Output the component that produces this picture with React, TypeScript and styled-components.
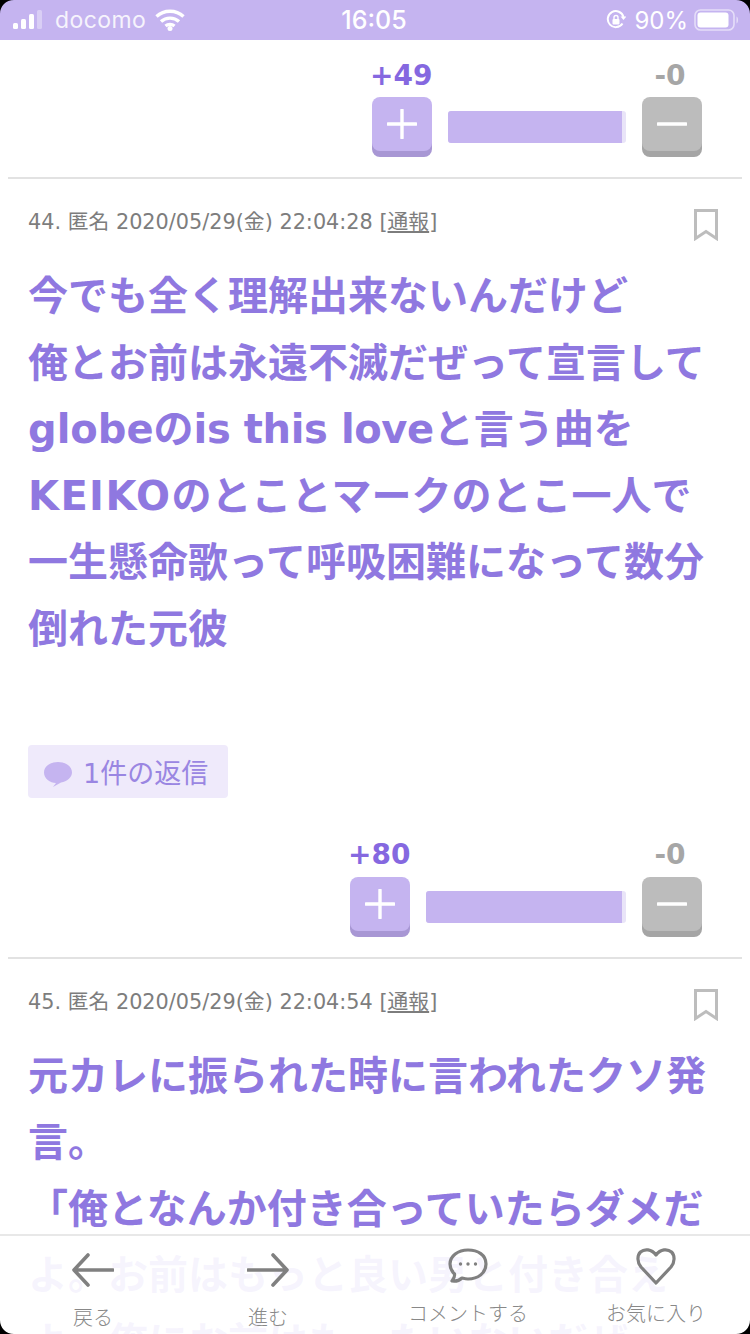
import React from "react";
import styled, { createGlobalStyle } from "styled-components";

const Global = createGlobalStyle`
  html, body { margin: 0; padding: 0; background: #fff; }
  #root { width: 750px; height: 1334px; }
`;

const Screen = styled.div`
  position: relative;
  width: 750px;
  height: 1334px;
  overflow: hidden;
  background: #fff;
  font-family: "DejaVu Sans", "Noto Sans CJK JP", sans-serif;
`;

const StatusBar = styled.header`
  height: 40px;
  background: #c5b4f0;
  color: #fff;
  display: grid;
  grid-template-columns: 1fr auto 1fr;
  align-items: center;
  padding: 0 10px 0 12px;
  font-family: "Inter", "Liberation Sans", sans-serif;
  font-size: 24px;
`;
const StatusLeft = styled.div`
  display: flex;
  align-items: center;
  gap: 9px;
`;
const Carrier = styled.span`
  letter-spacing: 0.4px;
  opacity: 0.85;
  font-size: 23px;
`;
const Clock = styled.span`
  font-size: 25px;
  font-weight: 500;
  margin-left: -4px;
`;
const StatusRight = styled.div`
  display: flex;
  align-items: center;
  justify-content: flex-end;
  gap: 8px;
`;
const Percent = styled.span`
  font-size: 24px;
  margin-right: -2px;
`;

const VoteRow = styled.div`
  display: flex;
  flex-direction: column;
  padding: 20px 48px 0 0;
`;
const VoteLabels = styled.div`
  display: flex;
  height: 30px;
  margin-bottom: 7px;
  align-items: center;
  justify-content: flex-end;
`;
const VoteCount = styled.span<{ $kind: "up" | "down"; $w: number }>`
  width: ${(p) => p.$w}px;
  text-align: center;
  font-size: 28px;
  font-weight: 700;
  margin-left: -2px;
  margin-right: 2px;
  color: ${(p) => (p.$kind === "up" ? "#8568e0" : "#a6a6a6")};
`;
const VoteSpacer = styled.span`
  flex: 0 0 auto;
`;
const VoteBar = styled.div`
  display: flex;
  align-items: flex-start;
  justify-content: flex-end;
  gap: 16px;
`;
const VoteBtn = styled.div<{ $kind: "up" | "down" }>`
  width: 60px;
  height: 54px;
  border-radius: 8px;
  background: ${(p) => (p.$kind === "up" ? "#c5b4f0" : "#bcbcbc")};
  box-shadow: 0 6px 0 ${(p) => (p.$kind === "up" ? "#a897d4" : "#a5a5a5")};
  margin-bottom: 6px;
  display: flex;
  align-items: center;
  justify-content: center;
`;
const Track = styled.div<{ $w: number }>`
  width: ${(p) => p.$w}px;
  height: 32px;
  margin-top: 14px;
  background: #e9e4f8;
  border-radius: 3px;
  overflow: hidden;
`;
const Fill = styled.div`
  height: 100%;
  background: #c5b4f0;
`;
const Rule = styled.hr`
  border: 0;
  height: 2px;
  background: #e2e2e2;
  margin: 20px 8px 0;
`;

const Comment = styled.article`
  padding: 30px 28px 22px;
`;
const MetaRow = styled.div`
  display: flex;
  justify-content: space-between;
  align-items: flex-start;
  height: 34px;
  padding-right: 4px;
`;
const Meta = styled.div`
  font-size: 20.8px;
  line-height: 28px;
  color: #7d7d7d;
  margin-top: -1px;
`;
const ReportLink = styled.span`
  text-decoration: underline;
`;
const Body = styled.p`
  margin: 20px 0 0;
  font-size: 40px;
  line-height: 66.6px;
  font-weight: 700;
  color: #8f78e0;
  white-space: pre;
`;
const Latin = styled.span<{ $track: number }>`
  letter-spacing: ${(p) => p.$track}px;
`;
const ReplyChip = styled.div`
  display: flex;
  align-items: center;
  gap: 10px;
  margin-top: 82px;
  height: 53px;
  width: 200px;
  box-sizing: border-box;
  padding: 0 15px;
  background: #efeafb;
  border-radius: 4px;
  color: #9a86e2;
  font-size: 27px;
`;
const ChipIcon = styled.svg`
  margin-top: 5px;
  flex: none;
`;

const BottomNav = styled.nav`
  position: absolute;
  left: 0;
  right: 0;
  bottom: 0;
  height: 98px;
  border-top: 2px solid #e8e8e8;
  background: rgba(255, 255, 255, 0.92);
  display: grid;
  grid-template-columns: 186px 164px 236px 140px;
`;
const NavItem = styled.div<{ $top: number }>`
  display: flex;
  flex-direction: column;
  align-items: center;
  color: #888;
  font-size: 20px;
  font-family: "Noto Sans CJK JP", sans-serif;
  font-weight: 300;
  padding-top: ${(p) => p.$top}px;
`;
const NavIconBox = styled.div`
  height: 44px;
  display: flex;
  align-items: center;
`;
const NavLabel = styled.span`
  margin-top: 10px;
  line-height: 29px;
`;
const Corner = styled.svg<{ $x: "left" | "right"; $y: "top" | "bottom" }>`
  position: absolute;
  ${(p) => p.$x}: 0;
  ${(p) => p.$y}: 0;
  width: 14px;
  height: 14px;
  transform: scale(${(p) => (p.$x === "right" ? -1 : 1)}, ${(p) => (p.$y === "bottom" ? -1 : 1)});
`;

const Plus = () => (
  <svg width="30" height="30" viewBox="0 0 30 30"><path d="M15 1v28M1 15h28" stroke="#fff" strokeWidth="3.4" strokeLinecap="round" /></svg>
);
const Minus = () => (
  <svg width="30" height="30" viewBox="0 0 30 30"><path d="M1 15h28" stroke="#fff" strokeWidth="3.4" strokeLinecap="round" /></svg>
);
const Bookmark = () => (
  <svg width="24" height="32" viewBox="0 0 24 32"><path d="M1.5 1.5h21v28L12 22.500 1.500 29.500z" fill="none" stroke="#bdbdbd" strokeWidth="3" /></svg>
);

const Vote = ({ up, trackW }: { up: number; trackW: number }) => (
  <VoteRow>
    <VoteLabels>
      <VoteCount $kind="up" $w={60}>+{up}</VoteCount>
      <VoteSpacer style={{ width: trackW + 32 }} />
      <VoteCount $kind="down" $w={60}>-0</VoteCount>
    </VoteLabels>
    <VoteBar>
      <VoteBtn $kind="up"><Plus /></VoteBtn>
      <Track $w={trackW}><Fill style={{ width: "98%" }} /></Track>
      <VoteBtn $kind="down"><Minus /></VoteBtn>
    </VoteBar>
  </VoteRow>
);

const CommentHead = ({ no, time }: { no: number; time: string }) => (
  <MetaRow>
    <Meta>{no}. 匿名 2020/05/29(金) {time} [<ReportLink>通報</ReportLink>]</Meta>
    <Bookmark />
  </MetaRow>
);

export default function App() {
  return (
    <Screen>
      <Global />
      <StatusBar>
        <StatusLeft>
          <svg width="34" height="22" viewBox="0 0 34 22">
            <rect x="1" y="14" width="5" height="6" rx="1.5" fill="#fff" />
            <rect x="9" y="10" width="5" height="10" rx="1.5" fill="#fff" />
            <rect x="17" y="5" width="5" height="15" rx="1.5" fill="#fff" />
            <rect x="25" y="1" width="5" height="19" rx="1.5" fill="#fff" fillOpacity=".35" />
          </svg>
          <Carrier>docomo</Carrier>
          <svg width="30" height="22" viewBox="0 0 30 22">
            <path d="M1.5 7.5C9 .5 21 .5 28.5 7.5M6 12.5c5-4.5 13-4.5 18 0M10.5 17c2.5-2 6.500-2 9 0" fill="none" stroke="#fff" strokeWidth="3.4" />
            <circle cx="15" cy="19.500" r="2.500" fill="#fff" />
          </svg>
        </StatusLeft>
        <Clock>16:05</Clock>
        <StatusRight>
          <svg width="20" height="20" viewBox="0 0 20 20">
            <path d="M16.500 13.500A8 8 0 1 1 17.500 7" fill="none" stroke="#fff" strokeWidth="2" />
            <path d="M14.500 6.500h6l-3 3.500z" fill="#fff" />
            <rect x="6.500" y="9" width="7" height="5.500" rx="1" fill="#fff" />
            <path d="M8 9V7.500a2 2 0 0 1 4 0V9" fill="none" stroke="#fff" strokeWidth="1.400" />
          </svg>
          <Percent>90%</Percent>
          <svg width="46" height="24" viewBox="0 0 46 24">
            <rect x="1" y="2" width="39" height="20" rx="5.500" fill="none" stroke="#fff" strokeOpacity=".55" strokeWidth="1.600" />
            <rect x="3.500" y="4.500" width="31" height="15" rx="3" fill="#fff" />
            <path d="M42.500 8.500c2 .5 2 6.500 0 7z" fill="#fff" fillOpacity=".55" />
          </svg>
        </StatusRight>
      </StatusBar>

      <Vote up={49} trackW={178} />
      <Rule />

      <Comment>
        <CommentHead no={44} time="22:04:28" />
        <Body>
          {`今でも全く理解出来ないんだけど
俺とお前は永遠不滅だぜって宣言して
globeの`}
          <Latin $track={-0.4}>is this love</Latin>
          {`と言う曲を
`}
          <Latin $track={1.4}>KEIKO</Latin>
          {`のとことマークのとこ一人で
一生懸命歌って呼吸困難になって数分
倒れた元彼`}
        </Body>
        <ReplyChip>
          <ChipIcon width="30" height="26" viewBox="0 0 30 26">
            <path d="M15 1C7 1 1 5.500 1 11.500S7 22 13 22l-3 4 8-4.500c6-1 11-5 11-10C29 5.500 23 1 15 1z" fill="#c5b4f0" />
          </ChipIcon>
          1件の返信
        </ReplyChip>
      </Comment>

      <Vote up={80} trackW={200} />
      <Rule />

      <Comment>
        <CommentHead no={45} time="22:04:54" />
        <Body>{`元カレに振られた時に言われたクソ発
言。
「俺となんか付き合っていたらダメだ
よ。お前はもっと良い男と付き合え
よ。俺にお前はもったいないだぜ`}</Body>
      </Comment>

      <BottomNav>
        <NavItem $top={12}>
          <NavIconBox>
            <svg width="42" height="34" viewBox="0 0 42 34"><path d="M41 17H3M16 2 2 17l14 15" fill="none" stroke="#808080" strokeWidth="3.600" strokeLinecap="round" strokeLinejoin="round" /></svg>
          </NavIconBox>
          <NavLabel>戻る</NavLabel>
        </NavItem>
        <NavItem $top={12}>
          <NavIconBox>
            <svg width="42" height="34" viewBox="0 0 42 34"><path d="M1 17h38M26 2l14 15-14 15" fill="none" stroke="#808080" strokeWidth="3.600" strokeLinecap="round" strokeLinejoin="round" /></svg>
          </NavIconBox>
          <NavLabel>進む</NavLabel>
        </NavItem>
        <NavItem $top={8}>
          <NavIconBox>
            <svg width="40" height="36" viewBox="0 0 40 36">
              <path d="M20 2C10 2 2 8 2 16c0 4 2 7.500 4.500 10 .5 2-1 5-2.500 7 4 .5 8-1 10-3 2 .5 4 1 6 1 10 0 18-6 18-15S30 2 20 2z" fill="none" stroke="#808080" strokeWidth="3.200" strokeLinejoin="round" />
              <circle cx="12.500" cy="16" r="1.700" fill="#808080" /><circle cx="20" cy="16" r="1.700" fill="#808080" /><circle cx="27.500" cy="16" r="1.700" fill="#808080" />
            </svg>
          </NavIconBox>
          <NavLabel>コメントする</NavLabel>
        </NavItem>
        <NavItem $top={8}>
          <NavIconBox>
            <svg width="40" height="38" viewBox="0 0 40 38"><path d="M20 36 5 20C1 15 1 8.500 4.500 5c4-3.500 11-3 15.500 3 4.500-6 11.500-6.500 15.500-3C39 8.500 39 15 35 20z" fill="none" stroke="#808080" strokeWidth="3.200" strokeLinejoin="round" /></svg>
          </NavIconBox>
          <NavLabel>お気に入り</NavLabel>
        </NavItem>
      </BottomNav>

      {(["left", "right"] as const).flatMap((x) =>
        (["top", "bottom"] as const).map((y) => (
          <Corner key={x + y} $x={x} $y={y} viewBox="0 0 14 14"><path d="M0 0h14C6 0 0 6 0 14z" fill="#000" /></Corner>
        ))
      )}
    </Screen>
  );
}
